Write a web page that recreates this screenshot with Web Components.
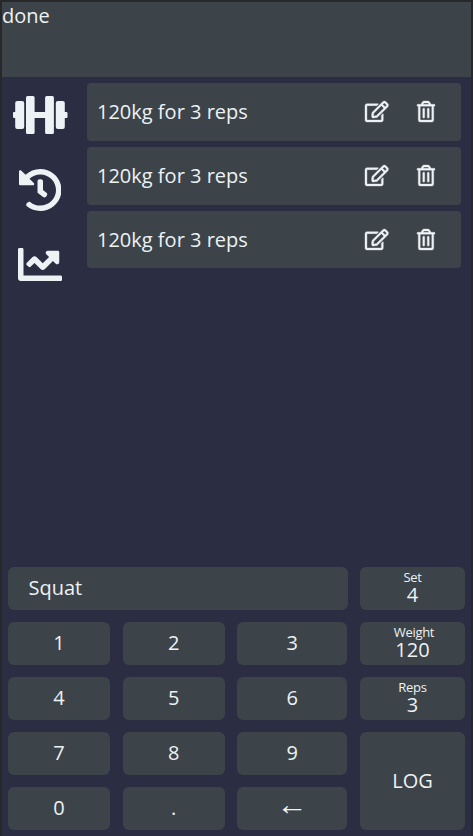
<!DOCTYPE html>
<html lang="en">
<head>
<meta charset="utf-8">
<title>Workout log</title>
<style>
html,body{margin:0;height:100%}
body{--panel:#3c4349;--page:#2b2d42;font-family:"Open Sans","Noto Sans",sans-serif;font-size:20px;line-height:27px;color:#edf2f4;background:#2b2d42;overflow:hidden}
</style>
</head>
<body>
<workout-app></workout-app>
<script>
const define = (name, html) => customElements.define(name, class extends HTMLElement {
  constructor() {
    super();
    const t = document.createElement('template');
    t.innerHTML = html;
    this.attachShadow({ mode: 'open' }).append(t.content.cloneNode(true));
  }
});

define('status-panel', `<style>:host{display:block;height:75px;background:var(--panel);box-sizing:border-box}</style><slot></slot>`);

define('icon-dumbbell', `<style>:host{display:block;width:55px;height:38px}svg{display:block}</style>
<svg width="55" height="38" viewBox="0.500 0 55 38" fill="currentColor">
<rect x="0.500" y="16" width="4" height="6" rx="1"/><rect x="51" y="16" width="4" height="6" rx="1"/>
<rect x="2.700" y="5" width="9" height="28" rx="2"/><rect x="13.500" y="0" width="8.600" height="38" rx="1.600"/>
<rect x="21" y="16" width="13" height="6"/>
<rect x="32.600" y="0" width="8.800" height="38" rx="1.600"/><rect x="43.300" y="5" width="9" height="28" rx="2"/></svg>`);

define('icon-history', `<style>:host{display:block;width:43px;height:42px}svg{display:block}</style>
<svg width="42.500" height="42" viewBox="8 8 496 496" preserveAspectRatio="none" fill="currentColor"><path d="M504 255.531c.253 136.640-111.180 248.372-247.820 248.468-59.015.042-113.223-20.530-155.822-54.911-11.077-8.940-11.905-25.541-1.839-35.607l11.267-11.267c8.609-8.609 22.353-9.551 31.891-1.984C173.062 425.135 212.781 440 256 440c101.705 0 184-82.311 184-184 0-101.705-82.311-184-184-184-48.814 0-93.149 18.969-126.068 49.932l50.754 50.754c10.080 10.080 2.941 27.314-11.313 27.314H24c-8.837 0-16-7.163-16-16V38.627c0-14.254 17.234-21.393 27.314-11.314l49.372 49.372C129.209 34.136 189.552 8 256 8c136.810 0 247.747 110.780 248 247.531zm-180.912 78.784l9.823-12.630c8.138-10.463 6.253-25.542-4.210-33.679L288 256.349V152c0-13.255-10.745-24-24-24h-16c-13.255 0-24 10.745-24 24v135.651l65.409 50.874c10.463 8.137 25.541 6.253 33.679-4.210z"/></svg>`);

define('icon-chart', `<style>:host{display:block;width:44px;height:33px}svg{display:block}</style>
<svg width="44" height="33" viewBox="0 64 512 384" preserveAspectRatio="none" fill="currentColor"><path d="M496 384H64V80c0-8.840-7.160-16-16-16H16C7.160 64 0 71.160 0 80v336c0 17.670 14.330 32 32 32h464c8.840 0 16-7.160 16-16v-32c0-8.840-7.160-16-16-16zM464 96H345.940c-21.380 0-32.090 25.850-16.970 40.970l32.400 32.400L288 242.750l-73.370-73.370c-12.500-12.500-32.760-12.500-45.250 0l-68.690 68.690c-6.250 6.250-6.250 16.380 0 22.630l22.620 22.620c6.250 6.250 16.380 6.250 22.630 0L192 237.250l73.370 73.370c12.500 12.500 32.760 12.500 45.250 0l96-96 32.400 32.400c15.120 15.120 40.970 4.410 40.970-16.970V112c.010-8.840-7.150-16-15.990-16z"/></svg>`);

define('icon-edit', `<style>:host{display:block;width:23.5px;height:21px}svg{display:block;overflow:visible}</style>
<svg width="23.5" height="21" viewBox="0 0 576 512" fill="currentColor" stroke="currentColor" stroke-width="9"><path d="M402.300 344.900l32-32c5-5 13.700-1.500 13.700 5.700V464c0 26.500-21.500 48-48 48H48c-26.500 0-48-21.500-48-48V112c0-26.500 21.500-48 48-48h273.500c7.100 0 10.700 8.600 5.700 13.700l-32 32c-1.500 1.500-3.500 2.300-5.700 2.300H48v352h352V350.500c0-2.100.8-4.100 2.300-5.600zm156.600-201.800L296.300 405.700l-90.400 10c-26.200 2.900-48.500-19.200-45.600-45.600l10-90.400L432.900 17.100c22.900-22.900 59.900-22.900 82.700 0l43.200 43.200c22.900 22.900 22.900 60 .1 82.800zM460.100 174L402 115.900 216.200 301.800l-7.300 65.300 65.300-7.300L460.100 174zm64.800-79.700l-43.200-43.200c-4.100-4.100-10.800-4.100-14.800 0L436 82l58.100 58.100 30.900-30.900c4-4.200 4-10.800-.1-14.900z"/></svg>`);

define('icon-trash', `<style>:host{display:block;width:18px;height:21px}svg{display:block;overflow:visible}</style>
<svg width="18" height="21" viewBox="0 0 448 512" preserveAspectRatio="none" fill="currentColor" stroke="currentColor" stroke-width="9"><path d="M268 416h24a12 12 0 0 0 12-12V188a12 12 0 0 0-12-12h-24a12 12 0 0 0-12 12v216a12 12 0 0 0 12 12zM432 80h-82.410l-34-56.700A48 48 0 0 0 274.410 0H173.590a48 48 0 0 0-41.160 23.300L98.410 80H16A16 16 0 0 0 0 96v16a16 16 0 0 0 16 16h16v336a48 48 0 0 0 48 48h288a48 48 0 0 0 48-48V128h16a16 16 0 0 0 16-16V96a16 16 0 0 0-16-16zM171.840 50.910A6 6 0 0 1 177 48h94a6 6 0 0 1 5.150 2.910L293.610 80H154.390zM368 464H80V128h288zm-212-48h24a12 12 0 0 0 12-12V188a12 12 0 0 0-12-12h-24a12 12 0 0 0-12 12v216a12 12 0 0 0 12 12z"/></svg>`);

define('set-entry', `<style>
:host{display:flex;align-items:center;box-sizing:border-box;height:58px;padding:0 26px 1px 10px;background:var(--panel);border-radius:4px}
.label{flex:1}icon-edit{margin-right:28.5px}
</style><span class="label"><slot></slot></span><icon-edit></icon-edit><icon-trash></icon-trash>`);

define('side-nav', `<style>:host{display:flex;flex-direction:column;align-items:center;width:76px;padding-top:19px;box-sizing:border-box}
icon-history{margin-top:35px}icon-chart{margin-top:37px}</style>
<icon-dumbbell></icon-dumbbell><icon-history></icon-history><icon-chart></icon-chart>`);

define('pad-key', `<style>:host{display:flex;align-items:center;justify-content:center;box-sizing:border-box;background:var(--panel);border-radius:6px;padding-bottom:2px}
:host([wide]){grid-column:span 3;justify-content:flex-start;padding-left:20.5px;margin-right:-1px}
:host([tall]){grid-row:span 2}
:host([arrow]){font-size:31px;padding-bottom:11px}</style><slot></slot>`);

define('value-key', `<style>:host{display:flex;flex-direction:column;align-items:center;background:var(--panel);border-radius:6px;box-sizing:border-box;padding-top:2px}
.label{font-size:13px;line-height:17px;letter-spacing:-.3px}
:host([shift]) .label{padding-left:3px}
.value{line-height:18px}</style>
<span class="label"><slot name="label"></slot></span><span class="value"><slot></slot></span>`);

define('key-pad', `<style>:host{display:grid;grid-template-columns:102px 102px 110px 105px;grid-template-rows:repeat(5,43px);row-gap:12px;column-gap:12.670px;padding:0 6px 6px}</style><slot></slot>`);

define('workout-app', `<style>
:host{display:flex;flex-direction:column;box-sizing:border-box;height:100vh;border:2px solid #272829;border-bottom:0;background:var(--page)}
.main{display:flex;flex:1;gap:9px}
.list{display:flex;flex-direction:column;gap:6px;flex:1;padding:6px 10px 0 0}
.list set-entry:last-child{height:57px;padding-bottom:0}
</style>
<status-panel>done</status-panel>
<div class="main"><side-nav></side-nav>
<div class="list"><set-entry>120kg for 3 reps</set-entry><set-entry>120kg for 3 reps</set-entry><set-entry>120kg for 3 reps</set-entry></div></div>
<key-pad>
<pad-key wide>Squat</pad-key><value-key><span slot="label">Set</span>4</value-key>
<pad-key>1</pad-key><pad-key>2</pad-key><pad-key>3</pad-key><value-key shift><span slot="label">Weight</span>120</value-key>
<pad-key>4</pad-key><pad-key>5</pad-key><pad-key>6</pad-key><value-key><span slot="label">Reps</span>3</value-key>
<pad-key>7</pad-key><pad-key>8</pad-key><pad-key>9</pad-key><pad-key tall>LOG</pad-key>
<pad-key>0</pad-key><pad-key>.</pad-key><pad-key arrow>←</pad-key>
</key-pad>`);
</script>
</body>
</html>
